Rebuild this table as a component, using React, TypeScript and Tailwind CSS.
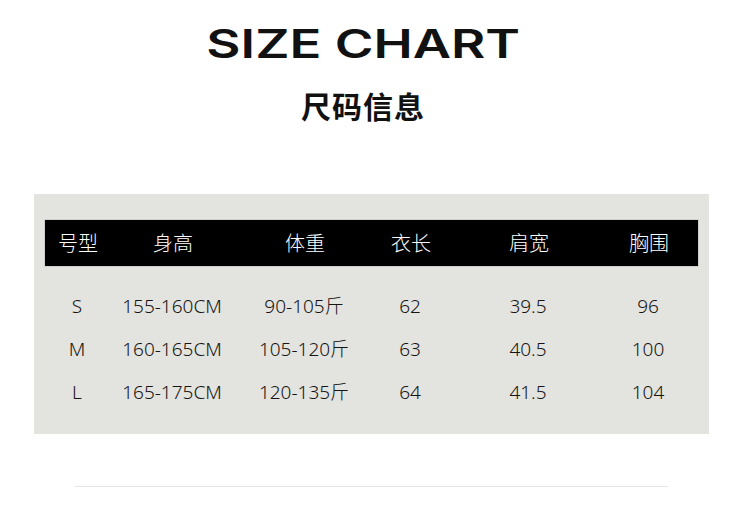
import React from "react";

const rows = [
  ["S", "155-160CM", "90-105斤", "62", "39.5", "96"],
  ["M", "160-165CM", "105-120斤", "63", "40.5", "100"],
  ["L", "165-175CM", "120-135斤", "64", "41.5", "104"],
];
const heads = ["号型", "身高", "体重", "衣长", "肩宽", "胸围"];
const grid = "grid grid-cols-[66px_124px_140px_72px_164px_76px]";

export default function App() {
  return (
    <div className="w-[750px] h-[505px] bg-white overflow-hidden" style={{ fontFamily: '"Noto Sans", "Noto Sans CJK SC", sans-serif' }}>
      <div className="pt-[24px] pr-[24px] flex justify-center">
        <div
          className="text-[39px] leading-[39px] font-semibold text-[#111] scale-x-[1.35] tracking-[0px]"
          style={{ fontFamily: 'Inter, "Liberation Sans", sans-serif' }}
        >
          SIZE CHART
        </div>
      </div>
      <div
        className="mt-[27px] pr-[24px] text-center text-[30px] leading-[30px] font-bold text-[#111] tracking-[1px]"
        style={{ fontFamily: '"Noto Sans CJK SC", sans-serif' }}
      >
        尺码信息
      </div>
      <div className="mt-[74px] ml-[34px] w-[675px] h-[240px] bg-[#e3e3df] pt-[25px] px-[10px]">
        <div className={`${grid} h-[48px] bg-black items-center border border-[#cfcfcb] text-white text-[20px] font-light`}
          style={{ fontFamily: '"Noto Sans CJK SC", sans-serif' }}>
          {heads.map((h) => (
            <div key={h} className="text-center leading-none">{h}</div>
          ))}
        </div>
        <div className="pt-[18px]">
          {rows.map((r) => (
            <div key={r[0]} className={`${grid} h-[43px] items-center text-[19px] text-[#151515] font-light`}>
              {r.map((c, i) => (
                <div key={i} className="text-center leading-none">{c}</div>
              ))}
            </div>
          ))}
        </div>
      </div>
      <div className="mt-[52px] ml-[75px] w-[593px] h-px bg-[#e6e6e6]" />
    </div>
  );
}
